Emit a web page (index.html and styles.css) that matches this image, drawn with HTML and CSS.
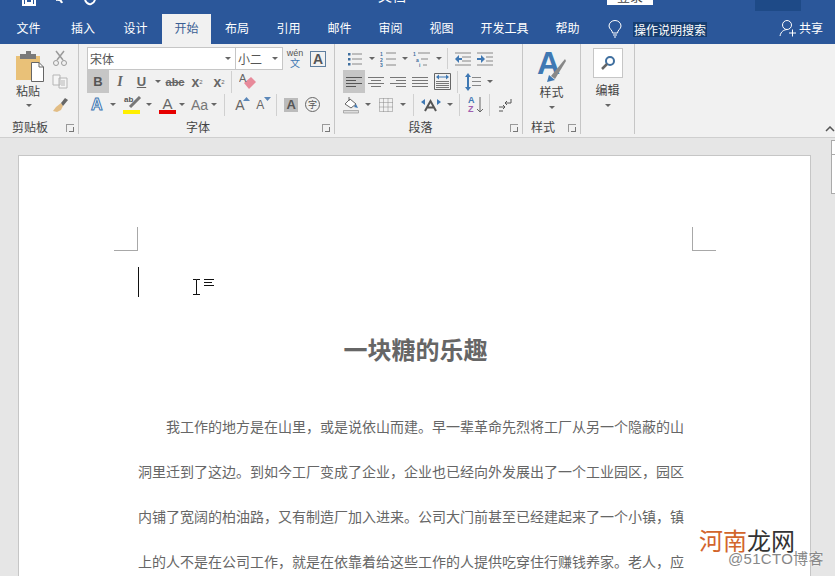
FILE: index.html
```html
<!DOCTYPE html>
<html lang="zh">
<head>
<meta charset="utf-8">
<title>Word</title>
<link rel="stylesheet" href="styles.css">
</head>
<body>
<div class="app">
  <header class="titlebar">
    <div class="qat">
      <svg class="qat-icon" width="16" height="8" viewBox="0 0 16 8"><path d="M2 0V5H14V0M5 0V3H11V0" fill="none" stroke="#fff" stroke-width="2"/></svg>
      <svg class="qat-icon" width="14" height="8" viewBox="0 0 14 8"><path d="M3 0Q8 -1 9 3" fill="none" stroke="#fff" stroke-width="2"/></svg>
      <svg class="qat-icon" width="14" height="8" viewBox="0 0 14 8"><path d="M2 0Q4 5 8 4Q11 3 12 0" fill="none" stroke="#fff" stroke-width="2"/></svg>
    </div>
    <div class="doc-title">文档</div>
    <div class="signin"><span>登录</span></div>
    <div class="win-btn"></div>
  </header>
  <nav class="tabs">
    <span class="tab t-file">文件</span>
    <span class="tab t-52">插入</span>
    <span class="tab t-53">设计</span>
    <span class="tab active">开始</span>
    <span class="tab t-52">布局</span>
    <span class="tab">引用</span>
    <span class="tab">邮件</span>
    <span class="tab">审阅</span>
    <span class="tab">视图</span>
    <span class="tab t-dev">开发工具</span>
    <span class="tab">帮助</span>
    <svg class="bulb" width="14" height="18" viewBox="0 0 14 18"><path d="M4.500 13C4.500 10 1 9 1 6A6 5.500 0 0 1 13 6C13 9 9.500 10 9.500 13ZM5 15H9M6 17H8" fill="none" stroke="#fff"/></svg>
    <span class="tell">操作说明搜索</span>
    <span class="share"><svg width="18" height="18" viewBox="0 0 18 18"><circle cx="8" cy="6" r="4.500" fill="none" stroke="#fff"/><path d="M1 17C2 12 5 11 8 10.500M10 14H17M13.500 10.500V17.500" fill="none" stroke="#fff"/></svg>共享</span>
  </nav>
  <section class="ribbon">
    <div class="group g-clip">
      <div class="group-body clip-body">
        <div class="big-btn paste">
          <svg width="30" height="33" viewBox="0 0 30 33"><path d="M2 7H26V31H2Z" fill="#e9c178"/><path d="M6 5H22V10H6Z" fill="#7a7a7a"/><path d="M12 2H17V6H12Z" fill="#7a7a7a"/><path d="M17.500 13.500H25L29.500 18V32.500H17.500Z" fill="#fff" stroke="#666"/><path d="M25 13.500V18H29.500" fill="none" stroke="#666"/></svg>
          <span class="big-label">粘贴</span>
          <i class="caret"></i>
        </div>
        <div class="clip-tools">
          <svg width="16" height="16" viewBox="0 0 16 16"><path d="M4 1L11 10M12 1L5 10" stroke="#9a9a9a" stroke-width="1.500" fill="none"/><circle cx="4" cy="13" r="2.500" fill="none" stroke="#9a9a9a"/><circle cx="12" cy="13" r="2.500" fill="none" stroke="#9a9a9a"/></svg>
          <svg width="16" height="15" viewBox="0 0 16 15"><path d="M1 1H8V11H1ZM7 4H15V14H7Z" fill="#f5f5f5" stroke="#b5b5b5"/><path d="M9 7H13M9 9H13M9 11H13" stroke="#b5b5b5"/></svg>
          <svg width="16" height="16" viewBox="0 0 16 16"><path d="M9 6L4 10L1 14L5 15L9 13L11 9Z" fill="#e2bd85"/><path d="M9 6L13 1L16 3L11 9Z" fill="#666"/></svg>
        </div>
      </div>
      <div class="group-label"><span>剪贴板</span><i class="launcher"></i></div>
    </div>
    <div class="group g-font">
      <div class="group-body font-body">
        <div class="font-row r1">
          <div class="combo c-name"><span>宋体</span><i class="caret"></i></div>
          <div class="combo c-size"><span>小二</span><i class="caret"></i></div>
          <div class="wen"><small>wén</small><b>文</b></div>
          <div class="abox">A</div>
        </div>
        <div class="font-row r2">
          <span class="fmt on"><b>B</b></span>
          <span class="fmt italic">I</span>
          <span class="fmt under"><b>U</b></span><i class="caret cu"></i>
          <span class="fmt strike">abc</span>
          <span class="fmt scr"><b>x</b><sub>2</sub></span>
          <span class="fmt scr"><b>x</b><sup>2</sup></span>
          <i class="sep sep-r2"></i>
          <svg class="eraser" width="18" height="18" viewBox="0 0 18 18"><path d="M5 10L12 4L17 9L10 16Z" fill="#e88a9a"/><text x="0" y="9" font-size="11" fill="#666" font-family="Liberation Sans">A</text></svg>
        </div>
        <div class="font-row r3">
          <span class="glow">A</span><i class="caret"></i>
          <span class="hl"><em>ab</em><svg width="16" height="14" viewBox="0 0 16 14"><path d="M4 11L14 1" stroke="#777" stroke-width="3"/></svg><u></u></span><i class="caret"></i>
          <span class="fc">A<u></u></span><i class="caret"></i>
          <span class="aa">Aa</span><i class="caret"></i>
          <i class="sep sep-r3"></i>
          <span class="grow">A<svg width="7" height="4" viewBox="0 0 7 4"><path d="M0 4L3.500 0L7 4Z" fill="#5b87b8"/></svg></span>
          <span class="grow shrink">A<svg width="7" height="4" viewBox="0 0 7 4"><path d="M0 0L3.500 4L7 0Z" fill="#5b87b8"/></svg></span>
          <i class="sep sep-r3b"></i>
          <span class="shade">A</span>
          <span class="circ">字</span>
        </div>
      </div>
      <div class="group-label"><span>字体</span><i class="launcher"></i></div>
    </div>
    <div class="group g-para">
      <div class="group-body para-body">
        <div class="para-row">
          <svg class="i-list" width="16" height="14" viewBox="0 0 16 14"><path d="M5 2H15M5 7H15M5 12H15" stroke="#888"/><path d="M1 1H3.500V3.500H1ZM1 6H3.500V8.500H1ZM1 11H3.500V13.500H1Z" fill="#3f6f9f"/></svg><i class="caret"></i>
          <svg class="ml" width="16" height="16" viewBox="0 0 16 16"><path d="M6 2H16M6 8H16M6 14H16" stroke="#888"/><text x="0" y="5" font-size="5" font-weight="700" font-family="Liberation Sans" fill="#3f6f9f">1</text><text x="0" y="10.500" font-size="5" font-weight="700" font-family="Liberation Sans" fill="#3f6f9f">2</text><text x="0" y="16" font-size="5" font-weight="700" font-family="Liberation Sans" fill="#3f6f9f">3</text></svg><i class="caret"></i>
          <svg class="ml4" width="17" height="16" viewBox="0 0 17 16"><path d="M5 2H17M8 8H15M10 14H14" stroke="#888"/><text x="0" y="5" font-size="5" font-weight="700" font-family="Liberation Sans" fill="#3f6f9f">1</text><text x="3" y="10.500" font-size="5" font-weight="700" font-family="Liberation Sans" fill="#3f6f9f">a</text><text x="6" y="16" font-size="5" font-weight="700" font-family="Liberation Sans" fill="#3f6f9f">i</text></svg><i class="caret"></i>
          <i class="sep sep-p1"></i>
          <svg width="16" height="14" viewBox="0 0 16 14"><path d="M0 1H16M7 5H16M7 9H16M0 13H16" stroke="#888"/><path d="M0 7L4 3V6H7V8H4V11Z" fill="#3f78b3"/></svg>
          <svg class="ml2" width="16" height="14" viewBox="0 0 16 14"><path d="M0 1H16M9 5H16M9 9H16M0 13H16" stroke="#888"/><path d="M8 7L4 3V6H0V8H4V11Z" fill="#3f78b3"/></svg>
        </div>
        <div class="para-row">
          <span class="align on"><svg width="16" height="12" viewBox="0 0 16 12"><path d="M0 1.500H16M0 4.500H10M0 7.500H16M0 10.500H10" stroke="#555"/></svg></span>
          <span class="align"><svg width="16" height="12" viewBox="0 0 16 12"><path d="M0 1.500H16M3 4.500H13M0 7.500H16M3 10.500H13" stroke="#777"/></svg></span>
          <span class="align"><svg width="16" height="12" viewBox="0 0 16 12"><path d="M0 1.500H16M6 4.500H16M0 7.500H16M6 10.500H16" stroke="#777"/></svg></span>
          <span class="align"><svg width="16" height="12" viewBox="0 0 16 12"><path d="M0 1.500H16M0 4.500H16M0 7.500H16M0 10.500H16" stroke="#777"/></svg></span>
          <span class="align"><svg width="17" height="17" viewBox="0 0 17 17"><path d="M.5 .5H16.500V16.500H.5Z" fill="none" stroke="#666"/><path d="M2 8.500H15M2 10.500H15M2 12.500H15M2 14.500H15" stroke="#777"/><path d="M2 4L5 1.500V3.500H12V1.500L15 4L12 6.500V4.500H5V6.500Z" fill="#3f78b3"/></svg></span>
          <i class="sep sep-p2"></i>
          <svg class="spacing" width="16" height="20" viewBox="0 0 16 20"><path d="M7 5.500H16M7 9.500H16M7 13.500H16" stroke="#888"/><path d="M3 1L6 5H4V15H6L3 19L0 15H2V5H0Z" fill="#3f78b3"/></svg><i class="caret"></i>
        </div>
        <div class="para-row">
          <svg width="16" height="18" viewBox="0 0 16 18"><path d="M2 8L7 3L13 8L8 12Z" fill="#fff" stroke="#666"/><path d="M6 1V5" stroke="#666"/><path d="M13 8L15 12L11 11Z" fill="#3f78b3"/><path d="M.5 14.500H15.500V17H.5Z" fill="#ddd" stroke="#888" stroke-width=".6"/></svg><i class="caret"></i>
          <svg class="ml3" width="14" height="14" viewBox="0 0 14 14"><path d="M.5 .5H13.500V13.500H.5Z M.5 4.500H13.500M.5 9H13.500M4.500 .5V13.500M9 .5V13.500" fill="none" stroke="#888" stroke-dasharray="1 1"/></svg><i class="caret c-bd"></i>
          <i class="sep sep-p3"></i>
          <svg width="20" height="14" viewBox="0 0 20 14"><path d="M4 13L9.500 3L15 13M6 9.500H13" fill="none" stroke="#555" stroke-width="2"/><path d="M0 4L4 1V7ZM20 4L16 1V7Z" fill="#3f78b3"/></svg><i class="caret"></i>
          <i class="sep sep-p4"></i>
          <span class="sort"><em>A</em><strong>Z</strong><svg width="6" height="16" viewBox="0 0 6 16"><path d="M3 0V15M0 12L3 15L6 12" fill="none" stroke="#666"/></svg></span>
          <i class="sep sep-p5"></i>
          <svg class="pilcrow" width="14" height="14" viewBox="0 0 14 14"><path d="M13 1V5H7M9 3L7 5L9 7" fill="none" stroke="#555"/><path d="M1 9H7M5 7L7 9L5 11M1 13H5" fill="none" stroke="#555"/></svg>
        </div>
      </div>
      <div class="group-label center"><span>段落</span><i class="launcher"></i></div>
    </div>
    <div class="group g-style">
      <div class="group-body style-body">
        <svg width="30" height="34" viewBox="0 0 30 34"><text x="0" y="25" font-size="32" font-weight="700" font-family="Liberation Sans" fill="#3f78b3">A</text><path d="M14 27L28 10L29 12L18 30Z" fill="#888"/><path d="M12 26L18 31L10 33Z" fill="#3f78b3"/></svg>
        <span class="big-label">样式</span>
        <i class="caret"></i>
      </div>
      <div class="group-label"><span>样式</span><i class="launcher"></i></div>
    </div>
    <div class="group g-edit">
      <div class="group-body edit-body">
        <span class="find"><svg width="16" height="16" viewBox="0 0 16 16"><circle cx="10" cy="6" r="4" fill="none" stroke="#3f6f9f" stroke-width="2"/><path d="M7 9L2 14" stroke="#666" stroke-width="2.500"/></svg></span>
        <span class="big-label">编辑</span>
        <i class="caret"></i>
      </div>
    </div>
    <svg class="collapse" width="10" height="6" viewBox="0 0 10 6"><path d="M1 5L5 1L9 5" fill="none" stroke="#555" stroke-width="1.500"/></svg>
  </section>
  <main class="workspace">
    <article class="page">
      <div class="crops"><i class="crop crop-l"></i><i class="crop crop-r"></i></div>
      <div class="caret-line"></div>
      <h1>一块糖的乐趣</h1>
      <p class="first">我工作的地方是在山里，或是说依山而建。早一辈革命先烈将工厂从另一个隐蔽的山</p>
      <p>洞里迁到了这边。到如今工厂变成了企业，企业也已经向外发展出了一个工业园区，园区</p>
      <p>内铺了宽阔的柏油路，又有制造厂加入进来。公司大门前甚至已经建起来了一个小镇，镇</p>
      <p>上的人不是在公司工作，就是在依靠着给这些工作的人提供吃穿住行赚钱养家。老人，应</p>
    </article>
    <aside class="scrollbar"><span class="sb-up"></span><span class="thumb"></span></aside>
    <svg class="ibeam" width="22" height="16" viewBox="0 0 22 16"><path d="M0 .5H3.500M7 .5H3.500V15.500M0 15.500H7" fill="none" stroke="#111"/><path d="M11 .5H21M11 3.500H19M11 6.500H21" stroke="#111"/></svg>
    <div class="wm"><span class="wm-a">河南</span><span class="wm-b">龙网</span></div>
    <div class="wm-c">@51CTO博客</div>
  </main>
</div>
</body>
</html>
```
FILE: styles.css
```css
* { box-sizing: border-box; }
html, body { margin: 0; padding: 0; }
body { width: 835px; height: 576px; overflow: hidden; font-family: "Noto Sans CJK SC", "Liberation Sans", sans-serif; }
i { display: block; font-style: normal; }
.app { width: 835px; height: 576px; display: flex; flex-direction: column; overflow: hidden; }

.titlebar { height: 14px; flex: none; background: #2b579a; display: flex; position: relative; overflow: hidden; }
.qat { display: flex; gap: 16px; padding-left: 21px; align-items: flex-start; }
.qat-icon { display: block; }
.doc-title { position: absolute; left: 378px; top: -15px; color: #fff; font-size: 14px; line-height: 20px; }
.signin { position: absolute; left: 607px; top: 0; width: 46px; height: 5px; background: #fff; overflow: hidden; text-align: center; }
.signin span { display: block; margin-top: -13px; font-size: 13px; line-height: 18px; color: #444; }
.win-btn { position: absolute; left: 755px; top: 0; width: 46px; height: 11px; background: #1e4a87; }

.tabs { height: 30px; flex: none; background: #2b579a; display: flex; align-items: stretch; color: #fff; font-size: 12px; position: relative; }
.tab { width: 51px; display: flex; align-items: center; justify-content: center; padding-bottom: 3px; }
.tab.t-file { width: 57px; }
.tab.t-52 { width: 52px; }
.tab.t-53 { width: 53px; }
.tab.t-dev { width: 75px; }
.tab.active { width: 49px; background: #f1f1f1; color: #3b5f94; }
.bulb { align-self: center; margin-left: 15px; }
.tell { align-self: center; margin-left: 11px; background: #173e70; line-height: 15px; height: 15px; font-size: 12px; padding: 0 1px; }
.share { position: absolute; left: 779px; top: 5px; display: flex; align-items: center; gap: 2px; font-size: 12px; line-height: 18px; }

.ribbon { height: 94px; flex: none; background: #f1f1f1; border-bottom: 1px solid #cfcfcf; display: flex; position: relative; color: #555; }
.group { display: flex; flex-direction: column; position: relative; border-right: 1px solid #c6c6c6; margin-bottom: 3px; }
.group-body { flex: 1; min-height: 0; }
.group-label { height: 16px; flex: none; display: flex; align-items: center; font-size: 12px; color: #444; position: relative; line-height: 16px; margin-bottom: -1px; }
.launcher { position: absolute; right: 4px; top: 5px; width: 8px; height: 8px; border-left: 1px solid #999; border-top: 1px solid #999; }
.launcher::after { content: ""; position: absolute; right: 0; bottom: 0; border-right: 1px solid #777; border-bottom: 1px solid #777; width: 4px; height: 4px; }
.caret { width: 0; height: 0; border-left: 3px solid transparent; border-right: 3px solid transparent; border-top: 3px solid #666; flex: none; }

.g-clip { width: 79px; }
.g-clip .group-label { padding-left: 12px; }
.clip-body { display: flex; padding: 5px 0 0 14px; }
.big-btn { width: 30px; display: flex; flex-direction: column; align-items: center; }
.big-label { font-size: 12px; line-height: 18px; color: #444; display: block; }
.paste svg { display: block; flex: none; }
.paste .big-label { width: 30px; text-align: center; padding-right: 2px; }
.paste .caret { margin-top: 4px; }
.clip-tools { margin-left: 8px; display: flex; flex-direction: column; gap: 8px; padding-top: 1px; }
.clip-tools svg { display: block; margin-bottom: 0; }

.g-font { width: 256px; }
.g-font .group-label { justify-content: center; padding-right: 17px; }
.font-body { padding: 3px 0 0 8px; display: flex; flex-direction: column; }
.font-row { display: flex; align-items: center; }
.r1 { height: 23px; }
.r2 { height: 23px; }
.r3 { height: 23px; }
.combo { height: 23px; background: #fff; border: 1px solid #c6c6c6; display: flex; align-items: center; justify-content: space-between; font-size: 12px; padding: 0 4px 0 2px; color: #555; }
.c-name { width: 149px; }
.c-size { width: 47px; margin-left: 0; border-left: 0; }
.wen { margin-left: 3px; width: 18px; display: flex; flex-direction: column; align-items: center; color: #555; }
.wen small { font: 9px/9px "Liberation Sans", sans-serif; }
.wen b { font-weight: 400; font-size: 10px; line-height: 10px; color: #3f78b3; }
.abox { margin-left: 6px; width: 16px; height: 16px; border: 1px solid #5f7f9f; font: 700 14px/14px "Liberation Sans", sans-serif; text-align: center; color: #555; }
.fmt { width: 22px; height: 23px; display: flex; align-items: center; justify-content: center; font: 700 13px "Liberation Sans", sans-serif; color: #666; }
.fmt.on { background: #c6c6c6; margin-left: 0; width: 22px; color: #555; }
.italic { font: italic 700 14px "Liberation Serif", serif; width: 22px; }
.under { margin-left: 0; width: 21px; }
.under b { text-decoration: underline; }
.cu { margin-left: 3px; }
.strike { width: 22px; margin-left: 3px; font-size: 11px; font-weight: 700; text-decoration: line-through; }
.scr { width: 22px; }
.scr b { font-size: 14px; }
.scr sub, .scr sup { font-size: 6px; font-weight: 400; line-height: 0; }
.sep { width: 1px; flex: none; background: #d0d0d0; }
.sep-r2 { height: 22px; margin-left: 1px; }
.eraser { margin-left: 7px; flex: none; }
.glow { width: 16px; margin-left: 4px; font: 700 16px/18px "Liberation Sans", sans-serif; color: #fff; -webkit-text-stroke: 1px #3f78b3; }
.r3 > .caret { margin-left: 3px; }
.hl { position: relative; width: 20px; height: 20px; margin-left: 7px; display: block; }
.hl em { position: absolute; left: 1px; top: 0; font: 700 8px/10px "Liberation Sans", sans-serif; color: #555; }
.hl svg { position: absolute; left: 3px; top: 1px; }
.hl u { position: absolute; left: 0; bottom: 1px; width: 17px; height: 4px; background: #ffef00; }
.fc { position: relative; width: 17px; height: 20px; margin-left: 7px; text-align: center; font: 400 15px/17px "Liberation Sans", sans-serif; color: #666; }
.fc u { position: absolute; left: 0; bottom: 1px; width: 17px; height: 4px; background: #e60000; }
.aa { margin-left: 6px; font: 400 14px/18px "Liberation Sans", sans-serif; color: #777; }
.sep-r3 { height: 22px; margin-left: 7px; }
.grow { position: relative; width: 20px; margin-left: 7px; font: 400 14px/18px "Liberation Sans", sans-serif; color: #666; padding-left: 3px; }
.grow svg { position: absolute; left: 11px; top: 1px; }
.shrink { font-size: 12px; margin-left: 1px; }
.sep-r3b { height: 22px; margin-left: 3px; }
.shade { margin-left: 7px; width: 14px; height: 14px; background: #bbb; font: 700 13px/14px "Liberation Sans", sans-serif; text-align: center; color: #555; }
.circ { margin-left: 7px; width: 15px; height: 15px; border: 1px solid #666; border-radius: 50%; font-size: 9px; line-height: 13px; text-align: center; color: #555; }

.g-para { width: 188px; }
.g-para .group-label { justify-content: center; padding-right: 16px; }
.para-body { padding: 3px 0 0 8px; display: flex; flex-direction: column; }
.para-row { height: 23px; display: flex; align-items: center; }
.para-row > .caret { margin-left: 6px; }
.para-row svg { flex: none; }
.i-list { margin-left: 4px; }
.ml { margin-left: 5px; }
.ml4 { margin-left: 5px; }
.ml2 { margin-left: 6px; }
.ml3 { margin-left: 8px; }
.c-bd { margin-left: 7px !important; }
.sep-p1 { height: 21px; margin-left: 5px; margin-right: 7px; }
.align { width: 22px; height: 23px; display: flex; align-items: center; justify-content: center; }
.align.on { background: #c6c6c6; }
.sep-p2 { height: 22px; margin-left: 4px; margin-right: 7px; }
.sep-p3 { height: 22px; margin-left: 7px; margin-right: 7px; }
.sep-p4 { height: 22px; margin-left: 6px; margin-right: 8px; }
.sort { display: block; position: relative; width: 18px; height: 20px; }
.sort em, .sort strong { position: absolute; left: 0; font: 700 9px/9px "Liberation Sans", sans-serif; }
.sort em { top: 1px; color: #3f78b3; }
.sort strong { top: 10px; color: #a05fb0; }
.sort svg { position: absolute; left: 9px; top: 2px; }
.sep-p5 { height: 22px; margin-left: 3px; margin-right: 8px; }

.g-style { width: 58px; }
.g-style .group-label { padding-left: 8px; }
.style-body { display: flex; flex-direction: column; align-items: center; padding: 5px 0 0 0; }
.style-body svg { display: block; }
.style-body .caret { margin-top: 5px; }

.g-edit { width: 54px; }
.edit-body { display: flex; flex-direction: column; align-items: center; padding: 4px 0 0 0; }
.find { width: 30px; height: 30px; background: #fff; border: 1px solid #c6c6c6; display: flex; align-items: center; justify-content: center; margin-bottom: 3px; }
.edit-body .caret { margin-top: 5px; }
.collapse { position: absolute; right: 0; top: 82px; }

.workspace { flex: 1; min-height: 0; background: #e6e6e6; position: relative; display: flex; padding: 17px 0 0 18px; overflow: hidden; }
.page { width: 793px; height: 600px; background: #fff; flex: none; border: 1px solid #c6c6c6; border-bottom: 0; padding: 71px 127px 0 119px; color: #555; position: relative; }
.crops { position: relative; height: 24px; margin: 0 -33px 0 -24px; display: flex; justify-content: space-between; }
.crop { width: 24px; height: 24px; border-bottom: 1px solid #a8a8a8; }
.crop-l { border-right: 1px solid #a8a8a8; }
.crop-r { border-left: 1px solid #a8a8a8; }
.caret-line { width: 1px; height: 30px; background: #111; margin: 16px 0 0 0; }
h1 { margin: 34px 0 0; font-size: 24px; font-weight: 700; line-height: 36px; text-align: center; color: #666; padding-left: 10px; }
.page p { margin: 0; font-size: 14px; line-height: 45px; white-space: nowrap; text-align: justify; text-align-last: justify; color: #666; }
.page p.first { margin-top: 37px; text-indent: 28px; }
.scrollbar { position: absolute; right: 0; top: 0; bottom: 0; width: 4px; background: #e6e6e6; padding-top: 2px; }
.sb-up { display: block; width: 4px; height: 15px; background: #fff; border: 1px solid #aaa; border-right: 0; }
.thumb { display: block; width: 4px; height: 39px; background: #fff; border: 1px solid #aaa; border-right: 0; border-top: 0; }
.ibeam { position: absolute; left: 193px; top: 141px; }
.wm { position: absolute; left: 699px; top: 387px; font-size: 24px; line-height: 30px; }
.wm-a { color: #d2652c; }
.wm-b { color: #333; }
.wm-c { position: absolute; left: 728px; top: 412px; font: 400 15px/18px "Liberation Sans", "Noto Sans CJK SC", sans-serif; color: #888; text-shadow: 0 0 2px #fff; letter-spacing: .3px; }
```
